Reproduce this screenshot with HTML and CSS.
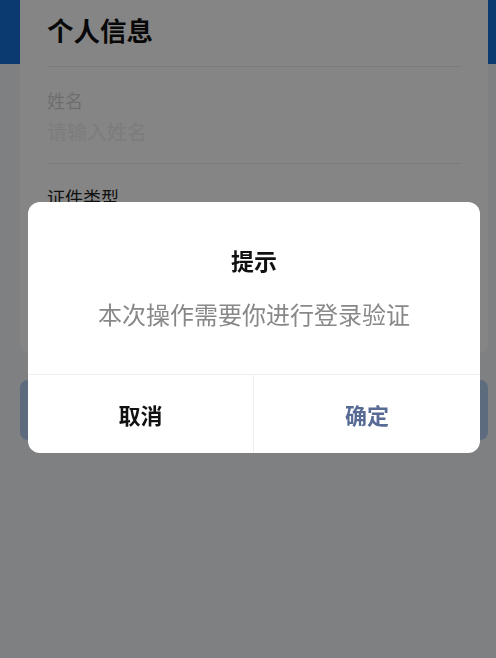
FILE: index.html
```html
<!DOCTYPE html>
<html lang="zh-CN">
<head>
<meta charset="utf-8">
<title>个人信息</title>
<link rel="stylesheet" href="styles.css">
</head>
<body>
<div class="page">
  <section class="card">
    <h1 class="card-title">个人信息</h1>
    <div class="field">
      <div class="field-label">姓名</div>
      <div class="field-input placeholder">请输入姓名</div>
    </div>
    <div class="field last">
      <div class="field-label dark">证件类型</div>
      <div class="field-input">身份证</div>
    </div>
  </section>
  <button class="submit"></button>
</div>

<div class="mask"></div>
<div class="modal">
  <div class="modal-body">
    <div class="modal-title">提示</div>
    <div class="modal-text">本次操作需要你进行登录验证</div>
  </div>
  <div class="modal-actions">
    <div class="modal-btn cancel">取消</div>
    <div class="modal-btn confirm">确定</div>
  </div>
</div>
</body>
</html>
```
FILE: styles.css
```css
* { box-sizing: border-box; }
html, body {
  margin: 0;
  padding: 0;
}
body {
  width: 496px;
  height: 658px;
  overflow: hidden;
  font-family: "Noto Sans CJK SC", "Noto Sans", sans-serif;
  background: linear-gradient(#1570d5 0, #1570d5 64px, #f4f6f8 64px);
}
.page {
  padding: 0 8px 0 20px;
}
.card {
  background: #fff;
  border-radius: 0 0 8px 8px;
  padding: 0 26px 0 27px;
  height: 353px;
}
.card-title {
  margin: 0;
  padding-top: 12px;
  font-size: 26.5px;
  line-height: 36px;
  font-weight: 700;
  color: #111;
  padding-bottom: 18px;
  border-bottom: 1px solid #ececec;
}
.field {
  padding: 20px 0 17px;
  border-bottom: 1px solid #ececec;
}
.field.last {
  border-bottom: none;
}
.field-label {
  font-size: 18px;
  line-height: 26px;
  color: #d4d4d4;
}
.field-label.dark { color: #222; }
.field-input {
  margin-top: 5px;
  font-size: 20px;
  line-height: 28px;
  color: #333;
}
.field-input.placeholder { color: #eeeeee; }
.submit {
  display: block;
  width: 100%;
  margin-top: 27px;
  height: 60px;
  border: none;
  border-radius: 8px;
  background: #b2cdf3;
  font-family: inherit;
}
.mask {
  position: fixed;
  inset: 0;
  background: rgba(0, 0, 0, 0.48);
}
.modal {
  position: fixed;
  left: 28px;
  top: 202px;
  width: 452px;
  background: #fff;
  border-radius: 12px;
  overflow: hidden;
}
.modal-body {
  padding: 42px 24px 44px;
  text-align: center;
  border-bottom: 1px solid #efefef;
}
.modal-title {
  font-size: 23px;
  line-height: 32px;
  font-weight: 700;
  color: #111;
}
.modal-text {
  margin-top: 22px;
  font-size: 24px;
  line-height: 32px;
  color: #888;
}
.modal-actions {
  display: grid;
  grid-template-columns: 1fr 1fr;
  height: 78px;
}
.modal-btn {
  display: flex;
  align-items: center;
  justify-content: center;
  font-size: 22px;
  font-weight: 700;
}
.cancel {
  color: #111;
  border-right: 1px solid #efefef;
}
.confirm { color: #576b95; }
```
